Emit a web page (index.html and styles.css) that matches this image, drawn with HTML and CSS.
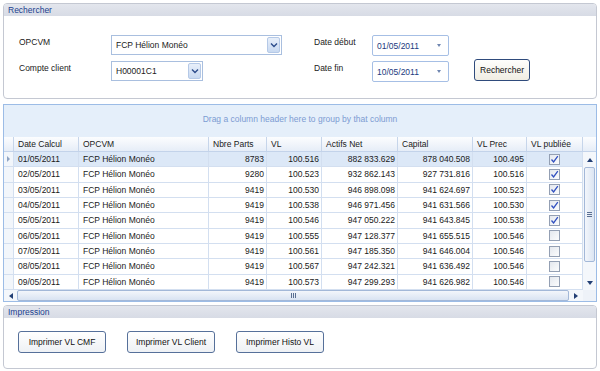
FILE: index.html
```html
<!DOCTYPE html>
<html lang="fr">
    <head>
        <meta charset="UTF-8" />
        <title>Valeurs liquidatives</title>
        <link rel="stylesheet" href="styles.css">
    </head>
    <body>
        <main class="window">
            <section class="group search">
                <div class="group-title">Rechercher</div>
                <div class="search-form">
                    <label>OPCVM</label>
                    <div class="combo wide">
                        <span>FCP Hélion Monéo</span>
                        <span class="combo-btn"><svg width="8" height="6" viewBox="0 0 8 6"><path d="M1 1.5 L4 4.5 L7 1.5" fill="none" stroke="#2d4d8c" stroke-width="1.4"/></svg></span>
                    </div>
                    <label>Date début</label>
                    <div class="date"><span>01/05/2011</span><span class="date-arrow"></span></div>
                    <span></span>

                    <label>Compte client</label>
                    <div class="combo narrow">
                        <span>H00001C1</span>
                        <span class="combo-btn"><svg width="8" height="6" viewBox="0 0 8 6"><path d="M1 1.5 L4 4.5 L7 1.5" fill="none" stroke="#2d4d8c" stroke-width="1.4"/></svg></span>
                    </div>
                    <label>Date fin</label>
                    <div class="date"><span>10/05/2011</span><span class="date-arrow"></span></div>
                    <button class="btn search-btn">Rechercher</button>
                </div>
            </section>

            <section class="grid">
                <div class="group-panel">Drag a column header here to group by that column</div>
                <div class="grid-body">
                    <div class="grid-table">
                        <div class="row head">
                            <div class="cell"></div>
                            <div class="cell">Date Calcul</div>
                            <div class="cell">OPCVM</div>
                            <div class="cell">Nbre Parts</div>
                            <div class="cell">VL</div>
                            <div class="cell">Actifs Net</div>
                            <div class="cell">Capital</div>
                            <div class="cell">VL Prec</div>
                            <div class="cell">VL publiée</div>
                        </div>
                        <div id="rows"></div>
                    </div>
                    <div class="vscroll-col">
                        <div class="head-blank"></div>
                        <div class="vscroll">
                            <span class="arrow up"></span>
                            <span class="vthumb"><i></i><i></i><i></i></span>
                            <span class="arrow down"></span>
                        </div>
                    </div>
                </div>
                <div class="hscroll-row">
                    <div class="hscroll">
                        <span class="arrow left"></span>
                        <span class="hthumb"><i></i><i></i><i></i></span>
                        <span class="arrow right"></span>
                    </div>
                    <div class="corner"></div>
                </div>
            </section>

            <section class="group print">
                <div class="group-title">Impression</div>
                <div class="print-buttons">
                    <button class="btn">Imprimer VL CMF</button>
                    <button class="btn">Imprimer VL Client</button>
                    <button class="btn">Imprimer Histo VL</button>
                </div>
            </section>
        </main>
        <script>
            var data = [
                ["01/05/2011", "8783", "100.516", "882 833.629", "878 040.508", "100.495", true],
                ["02/05/2011", "9280", "100.523", "932 862.143", "927 731.816", "100.516", true],
                ["03/05/2011", "9419", "100.530", "946 898.098", "941 624.697", "100.523", true],
                ["04/05/2011", "9419", "100.538", "946 971.456", "941 631.566", "100.530", true],
                ["05/05/2011", "9419", "100.546", "947 050.222", "941 643.845", "100.538", true],
                ["06/05/2011", "9419", "100.555", "947 128.377", "941 655.515", "100.546", false],
                ["07/05/2011", "9419", "100.561", "947 185.350", "941 646.004", "100.546", false],
                ["08/05/2011", "9419", "100.567", "947 242.321", "941 636.492", "100.546", false],
                ["09/05/2011", "9419", "100.573", "947 299.293", "941 626.982", "100.546", false]
            ];
            var check = '<svg width="9" height="9" viewBox="0 0 9 9"><path d="M1.5 4.5 L3.6 7 L7.8 1.2" fill="none" stroke="#3150c0" stroke-width="1.3"/></svg>';
            var html = "";
            data.forEach(function (r, i) {
                html += '<div class="row' + (i === 0 ? " current" : "") + '">';
                html += '<div class="cell ind">' + (i === 0 ? '<span class="tri"></span>' : "") + "</div>";
                html += '<div class="cell">' + r[0] + "</div>";
                html += '<div class="cell">FCP Hélion Monéo</div>';
                for (var k = 1; k < 6; k++) {
                    html += '<div class="cell num">' + r[k] + "</div>";
                }
                html += '<div class="cell chk"><span class="box">' + (r[6] ? check : "") + "</span></div>";
                html += "</div>";
            });
            document.getElementById("rows").innerHTML = html;
        </script>
    </body>
</html>
```

FILE: styles.css
```css
body {
    margin: 0;
    background: #fff;
    font-family: "Liberation Sans", Arial, sans-serif;
    font-size: 8.5px;
    color: #1a1a1a;
}
.window {
    width: 600px;
    height: 371px;
    box-sizing: border-box;
    padding: 3px 3px 0 3px;
    display: flex;
    flex-direction: column;
}
.group {
    border: 1px solid #c4c8d2;
    border-radius: 4px;
    background: #fff;
    box-sizing: border-box;
}
.group-title {
    height: 12px;
    line-height: 12px;
    padding-left: 4px;
    background: linear-gradient(#e3e6ed, #d7dbe5);
    border-radius: 3px 3px 0 0;
    color: #203f8f;
    font-size: 8.5px;
}
.search {
    height: 96px;
}
.search-form {
    display: grid;
    grid-template-columns: 92px 203px 58px 102px 55px;
    grid-template-rows: 20px 20px;
    row-gap: 6px;
    padding: 19px 0 0 15px;
}
.search-form label {
    padding-top: 2px;
}
.combo {
    display: flex;
    align-items: center;
    box-sizing: border-box;
    height: 20px;
    padding-left: 4px;
    border: 1px solid #a9bfdf;
}
.combo.wide {
    width: 171px;
}
.combo.narrow {
    width: 92px;
}
.combo-btn {
    margin-left: auto;
    margin-right: 1px;
    width: 13px;
    height: 16px;
    box-sizing: border-box;
    display: flex;
    align-items: center;
    justify-content: center;
    border: 1px solid #b5c9e7;
    border-radius: 2px;
    background: linear-gradient(#e8effa, #c8d9f1);
}
.date {
    display: flex;
    align-items: center;
    box-sizing: border-box;
    width: 77px;
    height: 21px;
    padding-left: 4px;
    border: 1px solid #a6bfe5;
    border-radius: 2px;
    color: #22397e;
}
.date-arrow {
    margin-left: auto;
    margin-right: 7px;
    border-left: 2.5px solid transparent;
    border-right: 2.5px solid transparent;
    border-top: 3px solid #6f86b0;
}
.btn {
    font-family: "Liberation Sans", Arial, sans-serif;
    font-size: 8.5px;
    color: #111;
    padding: 0;
    border: 1px solid #56709a;
    border-radius: 3px;
    background: linear-gradient(#ffffff, #eef1f5);
}
.search-btn {
    width: 56px;
    height: 22px;
    margin-top: -2px;
    border-color: #2f4b7c;
    background: linear-gradient(#fefefc, #f0ede3);
}

/* grid */
.grid {
    margin-top: 5px;
    height: 198px;
    box-sizing: border-box;
    border: 1px solid #9cbce6;
    display: flex;
    flex-direction: column;
}
.group-panel {
    height: 32px;
    line-height: 28px;
    text-align: center;
    background: #e5effa;
    color: #7c9bd2;
}
.grid-body {
    display: flex;
}
.grid-table {
    width: 579px;
}
.row {
    display: grid;
    grid-template-columns: 10px 65px 130px 58px 55px 76px 75px 54px 56px;
    height: 15.33px;
    box-sizing: border-box;
    border-bottom: 1px solid #d3dff0;
}
.cell {
    border-right: 1px solid #d3dff0;
    padding: 0 4px;
    line-height: 14px;
    white-space: nowrap;
    overflow: hidden;
}
.row.head {
    height: 15px;
    background: linear-gradient(#fcfdfe, #e6edf7);
    border-bottom: 1px solid #c3d3ea;
}
.row.head .cell {
    border-right-color: #c6d5ea;
    line-height: 14px;
}
.row.current {
    background: #dce8f7;
}
.cell.ind {
    padding: 0;
    background: #f2f6fb;
    display: flex;
    align-items: center;
    justify-content: center;
}
.tri {
    border-top: 3px solid transparent;
    border-bottom: 3px solid transparent;
    border-left: 3px solid #8ea3c3;
}
.cell.num {
    text-align: right;
    padding-right: 2px;
}
.cell.chk {
    display: flex;
    align-items: center;
    justify-content: center;
    padding: 0;
}
.box {
    width: 11px;
    height: 11px;
    box-sizing: border-box;
    border: 1px solid #939fb3;
    background: linear-gradient(135deg, #e4e8ee, #fbfcfd);
    display: flex;
    align-items: center;
    justify-content: center;
}
.vscroll-col {
    width: 13px;
    display: flex;
    flex-direction: column;
}
.head-blank {
    height: 15px;
    box-sizing: border-box;
    background: linear-gradient(#fcfdfe, #e6edf7);
    border-bottom: 1px solid #c3d3ea;
}
.vscroll {
    position: relative;
    height: 138px;
    background: #f4f7fb;
}
.arrow {
    position: absolute;
    width: 0;
    height: 0;
}
.arrow.up {
    top: 6px;
    left: 4px;
    border-left: 3px solid transparent;
    border-right: 3px solid transparent;
    border-bottom: 4px solid #233f74;
}
.arrow.down {
    bottom: 5px;
    left: 4px;
    border-left: 3px solid transparent;
    border-right: 3px solid transparent;
    border-top: 4px solid #233f74;
}
.vthumb {
    position: absolute;
    top: 15px;
    left: 1px;
    width: 11px;
    height: 95px;
    box-sizing: border-box;
    border: 1px solid #a3b8d8;
    border-radius: 2px;
    background: linear-gradient(90deg, #f3f6fb, #dbe5f3);
    display: flex;
    flex-direction: column;
    align-items: center;
    justify-content: center;
    gap: 1px;
}
.vthumb i {
    width: 5px;
    height: 1px;
    background: #5a6f92;
}
.hscroll-row {
    display: flex;
    height: 11px;
}
.hscroll {
    position: relative;
    width: 579px;
    background: #f4f7fb;
}
.arrow.left {
    top: 3px;
    left: 5px;
    border-top: 3px solid transparent;
    border-bottom: 3px solid transparent;
    border-right: 4px solid #233f74;
}
.arrow.right {
    top: 3px;
    right: 5px;
    border-top: 3px solid transparent;
    border-bottom: 3px solid transparent;
    border-left: 4px solid #233f74;
}
.hthumb {
    position: absolute;
    top: 0;
    left: 13px;
    width: 552px;
    height: 11px;
    box-sizing: border-box;
    border: 1px solid #a3b8d8;
    border-radius: 2px;
    background: linear-gradient(#f3f6fb, #d9e3f2);
    display: flex;
    align-items: center;
    justify-content: center;
    gap: 1px;
}
.hthumb i {
    width: 1px;
    height: 5px;
    background: #5a6f92;
}
.corner {
    width: 13px;
    background: #eef2f8;
}

/* impression */
.print {
    margin-top: 3px;
    height: 64px;
}
.print-buttons {
    display: flex;
    gap: 21px;
    padding: 13px 0 0 14px;
}
.print-buttons .btn {
    width: 88px;
    height: 22px;
}
```
